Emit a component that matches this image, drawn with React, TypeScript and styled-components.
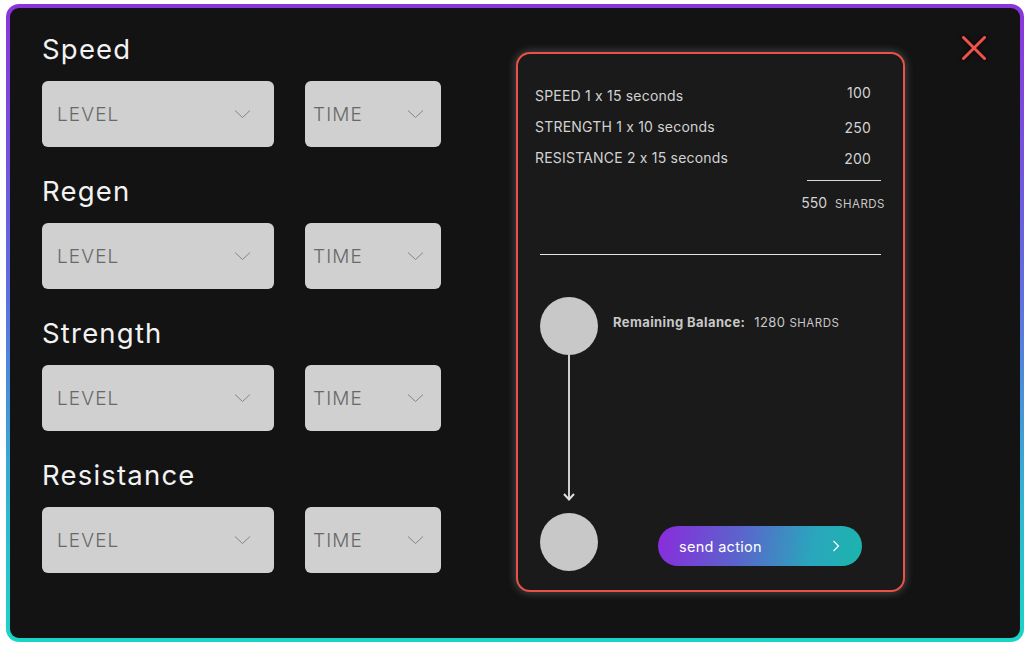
import React from "react";
import styled, { createGlobalStyle } from "styled-components";

const Global = createGlobalStyle`
  html, body { margin: 0; padding: 0; background: #ffffff; }
  body { font-family: "Inter", "Noto Sans", sans-serif; font-feature-settings: "calt" 0; }
  * { box-sizing: border-box; }
`;

const Frame = styled.div`
  margin: 4px 6px 0 6px;
  width: 1018px;
  height: 638px;
  padding: 4px;
  border-radius: 13px;
  background: linear-gradient(to bottom, #8b34dc 0%, #5f6ee0 45%, #2fb8d0 80%, #1bd4c6 100%);
`;

const Inner = styled.div`
  width: 100%;
  height: 100%;
  border-radius: 9px;
  background: #131313;
  display: flex;
  align-items: flex-start;
  padding: 24px 0 0 32px;
`;

const LeftCol = styled.div`
  width: 400px;
  display: flex;
  flex-direction: column;
  gap: 27px;
`;

const Section = styled.div`
  display: flex;
  flex-direction: column;
  gap: 15px;
`;

const Label = styled.div`
  font-size: 27.5px;
  line-height: 34px;
  color: #f2f2f2;
  font-weight: 400;
  letter-spacing: 1.2px;
`;

const Selects = styled.div`
  display: flex;
  gap: 31px;
`;

const Select = styled.div<{ $w: number; $pl: number; $pr: number }>`
  width: ${(p) => p.$w}px;
  height: 66px;
  border-radius: 6px;
  background: #d0d0d0;
  display: flex;
  align-items: center;
  justify-content: space-between;
  padding: 0 ${(p) => p.$pr}px 0 ${(p) => p.$pl}px;
  color: #686868;
  font-size: 19px;
  font-weight: 300;
  letter-spacing: 1.1px;
`;

const Chevron = () => (
  <svg width="17" height="10" viewBox="0 0 17 10" fill="none">
    <path d="M1 1.5 L8.5 8.5 L16 1.5" stroke="#858585" strokeWidth="1" />
  </svg>
);

const Card = styled.div`
  margin-left: 74px;
  margin-top: 20px;
  width: 389px;
  height: 540px;
  border: 2.5px solid #ea5149;
  border-radius: 14px;
  background: #1a1a1a;
  box-shadow: 0 0 7px 2px rgba(110, 110, 110, 0.45);
  padding: 32px 20px 19px 17px;
  display: flex;
  flex-direction: column;
  color: #d2d2d2;
`;

const Rows = styled.div`
  display: flex;
  flex-direction: column;
  gap: 11px;
`;

const Row = styled.div`
  display: flex;
  justify-content: space-between;
  font-size: 14px;
  line-height: 20px;
  padding-right: 12px;
  letter-spacing: 0.2px;
`;

const Value = styled.span<{ $shift: number }>`
  transform: translateY(${(p) => p.$shift}px);
`;

const ShortRule = styled.div`
  align-self: flex-end;
  width: 74px;
  height: 1px;
  background: #d8d8d8;
  margin: 12px 2px 0 0;
`;

const Total = styled.div`
  align-self: flex-end;
  display: flex;
  align-items: baseline;
  gap: 8px;
  margin: 12px -2px 0 0;
  line-height: 20px;
  font-size: 14px;
`;

const Unit = styled.span`
  font-size: 11.5px;
  letter-spacing: 0.5px;
  color: #c8c8c8;
`;

const LongRule = styled.div`
  height: 1px;
  background: #e6e6e6;
  margin: 40px 2px 0 5px;
`;

const Flow = styled.div`
  margin: 42px 0 0 5px;
  display: flex;
  gap: 15px;
`;

const Track = styled.div`
  display: flex;
  flex-direction: column;
  align-items: center;
  width: 58px;
`;

const Node = styled.div`
  width: 58px;
  height: 58px;
  border-radius: 50%;
  background: #c8c8c8;
`;

const FlowRight = styled.div`
  flex: 1;
  display: flex;
  flex-direction: column;
  justify-content: space-between;
  padding: 17px 0 5px 0;
`;

const Balance = styled.div`
  font-size: 13px;
  line-height: 16px;
  color: #c8c8c8;
  display: flex;
  gap: 9px;
  letter-spacing: 0.4px;
`;

const Bold = styled.span`
  font-weight: 700;
`;

const Button = styled.button`
  margin-left: 45px;
  width: 204px;
  height: 40px;
  border: 0;
  border-radius: 20px;
  background: linear-gradient(100deg, #8a2bdc 0%, #5b64cc 40%, #2aa6bc 75%, #1bb5ad 100%);
  color: #ffffff;
  font-family: inherit;
  font-size: 14.5px;
  letter-spacing: 0.3px;
  display: flex;
  align-items: center;
  justify-content: space-between;
  padding: 0 22px 0 21px;
`;

const CloseWrap = styled.div`
  margin: 4px 0 0 57px;
  display: flex;
  filter: drop-shadow(0 0 2px rgba(0, 0, 0, 0.9));
`;

const Connector = () => (
  <svg width="14" height="158" viewBox="0 0 14 158">
    <line x1="7" y1="0" x2="7" y2="145" stroke="#cfcfcf" strokeWidth="2" />
    <path d="M2 139 L7 144.5 L12 139" stroke="#e0e0e0" strokeWidth="2" fill="none" />
  </svg>
);

const sections = ["Speed", "Regen", "Strength", "Resistance"];

const items = [
  { label: "SPEED 1 x 15 seconds", value: "100", shift: -3 },
  { label: "STRENGTH 1 x 10 seconds", value: "250", shift: 1 },
  { label: "RESISTANCE 2 x 15 seconds", value: "200", shift: 1 },
];

export default function App() {
  return (
    <>
      <Global />
      <Frame>
        <Inner>
          <LeftCol>
            {sections.map((s) => (
              <Section key={s}>
                <Label>{s}</Label>
                <Selects>
                  <Select $w={232} $pl={15} $pr={23}>
                    LEVEL
                    <Chevron />
                  </Select>
                  <Select $w={136} $pl={8} $pr={17}>
                    TIME
                    <Chevron />
                  </Select>
                </Selects>
              </Section>
            ))}
          </LeftCol>
          <Card>
            <Rows>
              {items.map((it) => (
                <Row key={it.label}>
                  <span>{it.label}</span>
                  <Value $shift={it.shift}>{it.value}</Value>
                </Row>
              ))}
            </Rows>
            <ShortRule />
            <Total>
              <span>550</span>
              <Unit>SHARDS</Unit>
            </Total>
            <LongRule />
            <Flow>
              <Track>
                <Node />
                <Connector />
                <Node />
              </Track>
              <FlowRight>
                <Balance>
                  <Bold>Remaining Balance:</Bold>
                  <span>
                    1280 <Unit>SHARDS</Unit>
                  </span>
                </Balance>
                <Button>
                  <span>send action</span>
                  <svg width="8" height="12" viewBox="0 0 8 12" fill="none">
                    <path d="M1.5 1 L6.5 6 L1.5 11" stroke="#ffffff" strokeWidth="1.2" />
                  </svg>
                </Button>
              </FlowRight>
            </Flow>
          </Card>
          <CloseWrap>
            <svg width="24" height="24" viewBox="0 0 24 24">
              <path d="M1.5 1.5 L22.5 22.5 M22.5 1.5 L1.5 22.5" stroke="#f0524a" strokeWidth="3" strokeLinecap="round" />
            </svg>
          </CloseWrap>
        </Inner>
      </Frame>
    </>
  );
}
